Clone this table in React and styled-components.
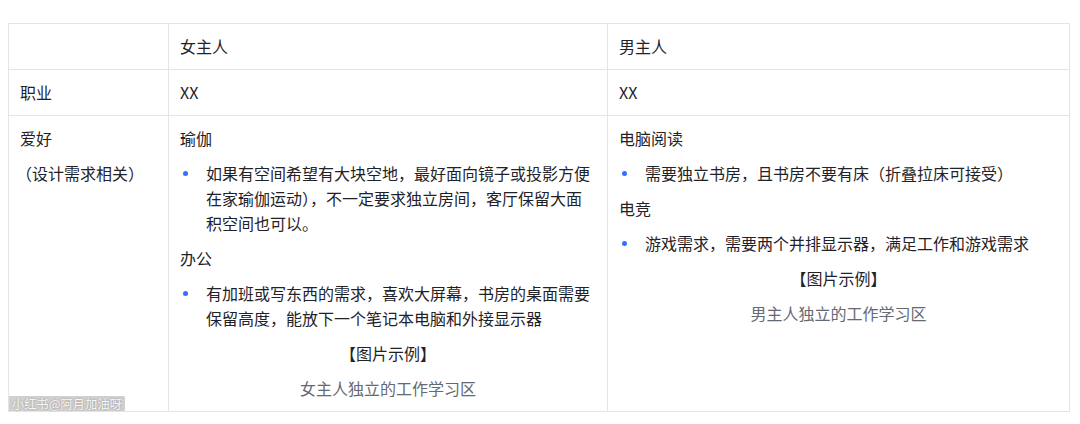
import React from "react";
import styled, { createGlobalStyle } from "styled-components";

const GlobalStyle = createGlobalStyle`
  body {
    margin: 0;
    background: #ffffff;
    font-family: "Noto Sans CJK SC", "Noto Sans", sans-serif;
    color: #1f2329;
  }
`;

const Page = styled.div`
  position: relative;
  width: 1080px;
  height: 424px;
  padding: 23px 11px 0 8px;
  box-sizing: border-box;
  overflow: hidden;
`;

const Table = styled.table`
  width: 1061px;
  border-collapse: collapse;
  table-layout: fixed;
  font-size: 16px;
  line-height: 25px;
`;

const Col = styled.col`
  width: ${(p) => p.$w}px;
`;

const Cell = styled.td`
  border: 1px solid #e3e4e6;
  padding: 10px 11px;
  vertical-align: top;
`;

const Para = styled.p`
  margin: 0 0 10px;
  text-align: ${(p) => (p.$center ? "center" : "left")};
  color: ${(p) => (p.$muted ? "#646a73" : "#1f2329")};
  &:last-child {
    margin-bottom: 0;
  }
`;

const Indented = styled(Para)`
  margin-left: -4px;
`;

const List = styled.ul`
  list-style: none;
  margin: 0 0 10px;
  padding: 0 0 0 26px;
`;

const Item = styled.li`
  position: relative;
  &::before {
    content: "";
    position: absolute;
    left: -23px;
    top: 10px;
    width: 5px;
    height: 5px;
    border-radius: 50%;
    background: #3370ff;
  }
`;

const Watermark = styled.div`
  position: absolute;
  left: 9px;
  top: 396px;
  padding: 0 3px;
  font-size: 12px;
  line-height: 15px;
  color: rgba(255, 255, 255, 0.95);
  background: rgba(150, 150, 150, 0.45);
  text-shadow: 0 0 2px rgba(0, 0, 0, 0.35);
  letter-spacing: 0.3px;
`;

export default function App() {
  return (
    <Page>
      <GlobalStyle />
      <Table>
        <colgroup>
          <Col $w={160} />
          <Col $w={439} />
          <Col $w={462} />
        </colgroup>
        <tbody>
          <tr>
            <Cell></Cell>
            <Cell>女主人</Cell>
            <Cell>男主人</Cell>
          </tr>
          <tr>
            <Cell>职业</Cell>
            <Cell>XX</Cell>
            <Cell>XX</Cell>
          </tr>
          <tr>
            <Cell>
              <Para>爱好</Para>
              <Indented>（设计需求相关）</Indented>
            </Cell>
            <Cell>
              <Para>瑜伽</Para>
              <List>
                <Item>
                  如果有空间希望有大块空地，最好面向镜子或投影方便在家瑜伽运动），不一定要求独立房间，客厅保留大面积空间也可以。
                </Item>
              </List>
              <Para>办公</Para>
              <List>
                <Item>
                  有加班或写东西的需求，喜欢大屏幕，书房的桌面需要保留高度，能放下一个笔记本电脑和外接显示器
                </Item>
              </List>
              <Para $center>【图片示例】</Para>
              <Para $center $muted>女主人独立的工作学习区</Para>
            </Cell>
            <Cell>
              <Para>电脑阅读</Para>
              <List>
                <Item>需要独立书房，且书房不要有床（折叠拉床可接受）</Item>
              </List>
              <Para>电竞</Para>
              <List>
                <Item>游戏需求，需要两个并排显示器，满足工作和游戏需求</Item>
              </List>
              <Para $center>【图片示例】</Para>
              <Para $center $muted>男主人独立的工作学习区</Para>
            </Cell>
          </tr>
        </tbody>
      </Table>
      <Watermark>小红书@阿月加油呀</Watermark>
    </Page>
  );
}
